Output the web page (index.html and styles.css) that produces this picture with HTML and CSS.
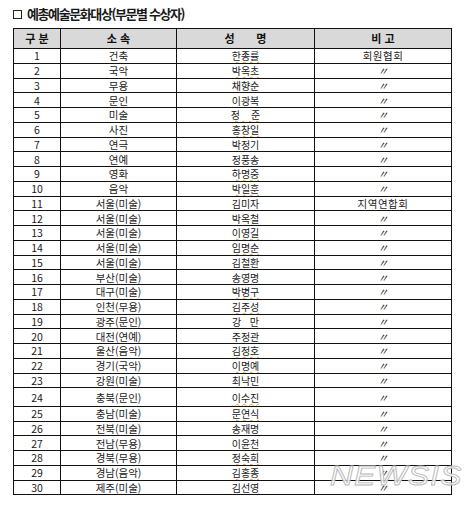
FILE: index.html
```html
<!DOCTYPE html>
<html lang="ko">
<head>
<meta charset="utf-8">
<link rel="stylesheet" href="styles.css">
</head>
<body>
<div class="page">
  <h1 class="title"><span class="box"></span>예총예술문화대상(부문별 수상자)</h1>
  <table class="awards">
    <colgroup>
      <col class="c1"><col class="c2"><col class="c3"><col class="c4">
    </colgroup>
    <thead>
      <tr><th>구 분</th><th>소 속</th><th>성&nbsp;&nbsp;&nbsp;&nbsp;&nbsp;&nbsp;&nbsp;명</th><th>비 고</th></tr>
    </thead>
    <tbody>
      <tr><td>1</td><td>건축</td><td><span class="nm">한종률</span></td><td class="note">회원협회</td></tr>
      <tr><td>2</td><td>국악</td><td><span class="nm">박옥초</span></td><td class="dit">〃</td></tr>
      <tr><td>3</td><td>무용</td><td><span class="nm">채향순</span></td><td class="dit">〃</td></tr>
      <tr><td>4</td><td>문인</td><td><span class="nm">이광복</span></td><td class="dit">〃</td></tr>
      <tr><td>5</td><td>미술</td><td><span class="nm">정&nbsp;&nbsp;&nbsp;&nbsp;준</span></td><td class="dit">〃</td></tr>
      <tr><td>6</td><td>사진</td><td><span class="nm">홍창일</span></td><td class="dit">〃</td></tr>
      <tr><td>7</td><td>연극</td><td><span class="nm">박정기</span></td><td class="dit">〃</td></tr>
      <tr><td>8</td><td>연예</td><td><span class="nm">정풍송</span></td><td class="dit">〃</td></tr>
      <tr><td>9</td><td>영화</td><td><span class="nm">하명중</span></td><td class="dit">〃</td></tr>
      <tr><td>10</td><td>음악</td><td><span class="nm">박일훈</span></td><td class="dit">〃</td></tr>
      <tr><td>11</td><td>서울(미술)</td><td><span class="nm">김미자</span></td><td class="note">지역연합회</td></tr>
      <tr><td>12</td><td>서울(미술)</td><td><span class="nm">박옥철</span></td><td class="dit">〃</td></tr>
      <tr><td>13</td><td>서울(미술)</td><td><span class="nm">이영길</span></td><td class="dit">〃</td></tr>
      <tr><td>14</td><td>서울(미술)</td><td><span class="nm">임명순</span></td><td class="dit">〃</td></tr>
      <tr><td>15</td><td>서울(미술)</td><td><span class="nm">김철환</span></td><td class="dit">〃</td></tr>
      <tr><td>16</td><td>부산(미술)</td><td><span class="nm">송영명</span></td><td class="dit">〃</td></tr>
      <tr><td>17</td><td>대구(미술)</td><td><span class="nm">박병구</span></td><td class="dit">〃</td></tr>
      <tr><td>18</td><td>인천(무용)</td><td><span class="nm">김주성</span></td><td class="dit">〃</td></tr>
      <tr><td>19</td><td>광주(문인)</td><td><span class="nm">강&nbsp;&nbsp;&nbsp;만</span></td><td class="dit">〃</td></tr>
      <tr><td>20</td><td>대전(연예)</td><td><span class="nm">주정관</span></td><td class="dit">〃</td></tr>
      <tr><td>21</td><td>울산(음악)</td><td><span class="nm">김정호</span></td><td class="dit">〃</td></tr>
      <tr><td>22</td><td>경기(국악)</td><td><span class="nm">이명예</span></td><td class="dit">〃</td></tr>
      <tr><td>23</td><td>강원(미술)</td><td><span class="nm">최낙민</span></td><td class="dit">〃</td></tr>
      <tr class="tall"><td>24</td><td>충북(문인)</td><td><span class="nm">이수진</span></td><td class="dit">〃</td></tr>
      <tr><td>25</td><td>충남(미술)</td><td><span class="nm">문연식</span></td><td class="dit">〃</td></tr>
      <tr><td>26</td><td>전북(미술)</td><td><span class="nm">송재명</span></td><td class="dit">〃</td></tr>
      <tr><td>27</td><td>전남(무용)</td><td><span class="nm">이윤천</span></td><td class="dit">〃</td></tr>
      <tr><td>28</td><td>경북(무용)</td><td><span class="nm">정숙희</span></td><td class="dit">〃</td></tr>
      <tr><td>29</td><td>경남(음악)</td><td><span class="nm">김홍종</span></td><td class="dit">〃</td></tr>
      <tr><td>30</td><td>제주(미술)</td><td><span class="nm">김선영</span></td><td class="dit">〃</td></tr>
    </tbody>
  </table>
  <div class="watermark">NEWSIS</div>
</div>
</body>
</html>
```

FILE: styles.css
```css
html, body {
  margin: 0;
  padding: 0;
  background: #ffffff;
}

.page {
  position: relative;
  width: 471px;
  height: 507px;
  padding: 7px 0 0 13px;
  box-sizing: border-box;
  font-family: "Noto Sans CJK KR", "Noto Sans", sans-serif;
  color: #111;
}

.title {
  margin: 0 0 7px 0;
  height: 14px;
  display: flex;
  align-items: center;
  font-size: 13px;
  line-height: 14px;
  font-weight: 700;
  letter-spacing: -1.4px;
  color: #1a1a1a;
}

.box {
  display: inline-block;
  flex: none;
  width: 9px;
  height: 9px;
  border: 1px solid #222;
  margin-right: 5px;
  box-sizing: border-box;
}

.awards {
  border-collapse: collapse;
  table-layout: fixed;
  width: 438px;
}

.c1 { width: 47px; }
.c2 { width: 116px; }
.c3 { width: 138px; }
.c4 { width: 137px; }

.awards th,
.awards td {
  border: 1px solid #111;
  padding: 0;
  text-align: center;
  vertical-align: middle;
  overflow: hidden;
  white-space: nowrap;
  line-height: 9px;
}

.awards th {
  height: 19px;
  background: #d9d9d9;
  font-size: 11px;
  font-weight: 700;
}

.awards td {
  height: 13.75px;
  font-size: 10.5px;
  font-weight: 400;
  color: #1a1a1a;
}

.awards tr.tall td {
  height: 17.5px;
}

.nm {
  font-size: 10px;
  line-height: 9px;
  text-decoration: underline wavy #e0a43c;
  text-decoration-thickness: 1px;
  text-underline-offset: 1px;
}

.note {
  letter-spacing: 0.5px;
}

.dit {
  font-size: 8px;
  font-style: italic;
  color: #333;
}

.watermark {
  position: absolute;
  left: 330px;
  top: 460px;
  font-family: "Liberation Sans", sans-serif;
  font-size: 32px;
  font-style: italic;
  letter-spacing: 1px;
  color: rgba(255, 255, 255, 0.85);
  -webkit-text-stroke: 1px #b8b8b8;
  transform: scaleY(0.85);
  transform-origin: left top;
}
```
